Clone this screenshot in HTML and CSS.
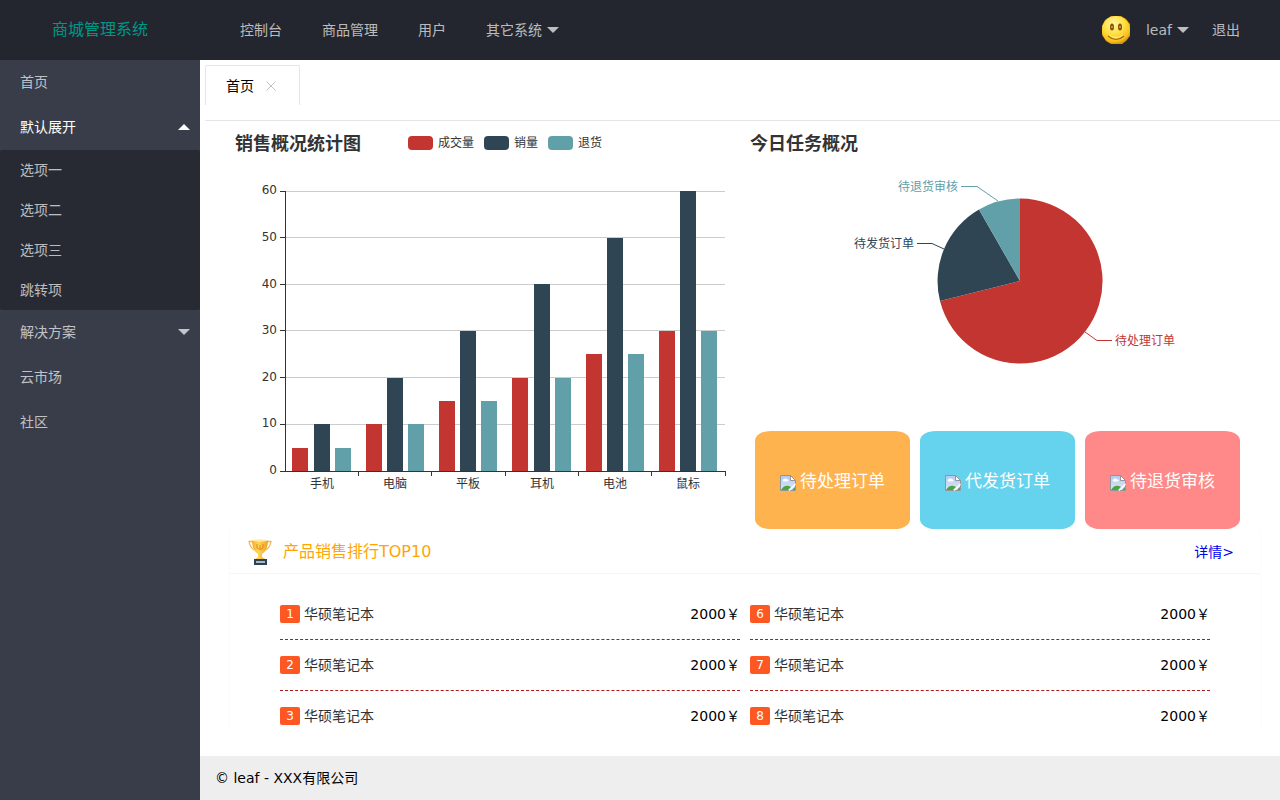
FILE: index.html
```html
<!DOCTYPE html>
<html lang="zh-CN">
<head>
<meta charset="utf-8">
<title>商城管理系统</title>
<link rel="stylesheet" href="styles.css">
</head>
<body>
<svg class="defs" aria-hidden="true">
  <defs>
    <linearGradient id="sky" x1="0" y1="0" x2="0" y2="1"><stop offset="0" stop-color="#b4c8f0"/><stop offset="1" stop-color="#dbe6fa"/></linearGradient>
    <radialGradient id="face" cx=".42" cy=".28" r=".75"><stop offset="0" stop-color="#fff6a0"/><stop offset=".5" stop-color="#ffdf3f"/><stop offset=".85" stop-color="#f7bd1c"/><stop offset="1" stop-color="#c98a10"/></radialGradient>
    <linearGradient id="gold" x1="0" y1="0" x2="1" y2="0"><stop offset="0" stop-color="#f5ab22"/><stop offset=".4" stop-color="#ffd65c"/><stop offset="1" stop-color="#f0a01c"/></linearGradient>
    <symbol id="missing" viewBox="0 0 16 16">
      <path d="M.5.5h10l5 5v10H.5z" fill="url(#sky)" stroke="#8f969c"/>
      <path d="M10.500.5v5h5z" fill="#fff" stroke="#8f969c"/>
      <path d="M3 6.500a1.500 1.500 0 0 1 1-2.500 2 2 0 0 1 3 .5 1 1 0 0 1 1 2z" fill="#fff"/>
      <path d="M1 15c2-4 5-5 8-4l2 1-3 3z" fill="#4da53c"/>
      <path d="M12 15h3v-3z" fill="#4da53c"/>
      <path d="M9 15.500L15.500 9" stroke="#fff" stroke-width="1.500"/>
    </symbol>
  </defs>
</svg>
<div class="app">
  <header class="header">
    <div class="logo">商城管理系统</div>
    <nav class="nav">
      <a href="#">控制台</a>
      <a href="#">商品管理</a>
      <a href="#">用户</a>
      <a href="#">其它系统<span class="caret"></span></a>
    </nav>
    <nav class="nav nav-user">
      <a href="#" class="user">
        <svg class="avatar" viewBox="0 0 30 30" aria-hidden="true">
          <path d="M10 1h10l5 3 4 5v12l-4 5-4 3H10l-5-3-4-6v-9l3-6z" fill="#d79a12"/>
          <circle cx="15" cy="15" r="14" fill="url(#face)"/>
          <ellipse cx="11" cy="12" rx="2" ry="3.500" fill="#8a5209"/>
          <ellipse cx="19" cy="12" rx="2" ry="3.500" fill="#8a5209"/>
          <circle cx="11" cy="12" r="1" fill="#c9a77c"/>
          <circle cx="19" cy="12" r="1" fill="#c9a77c"/>
          <path d="M7 21q8 7 16 0" fill="none" stroke="#a8680c" stroke-width="1.200"/>
          <path d="M8 20q7 5 14 0" fill="none" stroke="#fff09a" stroke-width="1"/>
        </svg>
        leaf<span class="caret"></span></a>
      <a href="#" class="logout">退出</a>
    </nav>
  </header>

  <div class="body">
    <aside class="side">
      <a href="#">首页</a>
      <a href="#" class="open">默认展开<span class="caret up"></span></a>
      <div class="sub">
        <a href="#">选项一</a>
        <a href="#">选项二</a>
        <a href="#">选项三</a>
        <a href="#">跳转项</a>
      </div>
      <a href="#">解决方案<span class="caret"></span></a>
      <a href="#">云市场</a>
      <a href="#">社区</a>
    </aside>

    <div class="column">
      <div class="tabs">
        <div class="tab">首页
          <button class="close" type="button" aria-label="关闭"><svg viewBox="0 0 10 10"><path d="M.5.5l9 9M9.500.5l-9 9" stroke="#c2c2c2" fill="none"/></svg></button>
        </div>
      </div>

      <main class="content">
        <div class="charts">
          <svg class="chart" viewBox="0 0 515 400" role="img" aria-label="销售概况统计图">
            <text x="5" y="29" class="chart-title">销售概况统计图</text>
            <rect x="178" y="15" width="25" height="14" rx="4" class="red"/>
            <rect x="254" y="15" width="25" height="14" rx="4" class="navy"/>
            <rect x="318" y="15" width="25" height="14" rx="4" class="teal"/>
            <g class="label"><text x="208" y="26">成交量</text><text x="284" y="26">销量</text><text x="348" y="26">退货</text></g>
            <path class="grid" d="M56 70.500H495M56 116.500H495M56 163.500H495M56 209.500H495M56 256.500H495M56 303.500H495"/>
            <path class="red" d="M62 350V327h16v23zM136 350V303h16v47zM209 350V280h16v70zM282 350V257h16v93zM356 350V233h16v117zM429 350V210h16v140z"/>
            <path class="navy" d="M84 350V303h16v47zM157 350V257h16v93zM230 350V210h16v140zM304 350V163h16v187zM377 350V117h16v233zM450 350V70h16v280z"/>
            <path class="teal" d="M105 350V327h16v23zM178 350V303h16v47zM251 350V280h16v70zM325 350V257h16v93zM398 350V233h16v117zM471 350V210h16v140z"/>
            <path class="axis" d="M55.500 70V351M50 350.500H496M50 70.500h5M50 116.500h5M50 163.500h5M50 209.500h5M50 256.500h5M50 303.500h5M128.500 351v4M201.500 351v4M275.500 351v4M348.500 351v4M421.500 351v4M495.500 351v4"/>
            <g class="label end"><text x="47" y="73">60</text><text x="47" y="120">50</text><text x="47" y="167">40</text><text x="47" y="213">30</text><text x="47" y="260">20</text><text x="47" y="306">10</text><text x="47" y="353">0</text></g>
            <g class="label mid"><text x="92" y="367">手机</text><text x="165" y="367">电脑</text><text x="238" y="367">平板</text><text x="312" y="367">耳机</text><text x="385" y="367">电池</text><text x="458" y="367">鼠标</text></g>
          </svg>

          <div class="tasks">
            <svg class="chart" viewBox="0 0 515 300" role="img" aria-label="今日任务概况">
              <text x="5" y="29" class="chart-title">今日任务概况</text>
              <path class="red" d="M275 160V77.500A82.500 82.500 0 1 1 195 180z"/>
              <path class="navy" d="M275 160L195 180A82.500 82.500 0 0 1 234 88.500z"/>
              <path class="teal" d="M275 160L234 88.500A82.500 82.500 0 0 1 275 77.500z"/>
              <path class="lead-red" d="M340 211l12 8.500h15"/>
              <path class="lead-navy" d="M199 128l-12-5.500h-15"/>
              <path class="lead-teal" d="M253 80l-21-14.500h-16"/>
              <g class="label"><text x="370" y="224" class="red">待处理订单</text></g>
              <g class="label end"><text x="169" y="127" class="navy">待发货订单</text><text x="213" y="70" class="teal">待退货审核</text></g>
            </svg>
            <div class="cards">
              <a href="#" class="card card-orange"><svg class="missing"><use href="#missing"/></svg>待处理订单</a>
              <a href="#" class="card card-blue"><svg class="missing"><use href="#missing"/></svg>代发货订单</a>
              <a href="#" class="card card-pink"><svg class="missing"><use href="#missing"/></svg>待退货审核</a>
            </div>
          </div>
        </div>

        <section class="panel">
          <div class="panel-head">
            <svg class="trophy" viewBox="0 0 24 26" aria-hidden="true">
              <path d="M5 2.500H1q1 7 7 9M19 2.500h4q-1 7-7 9" fill="none" stroke="#efb858" stroke-width="1.300"/>
              <path d="M4 1h16q0 10-6 14v3l3 2H7l3-2v-3Q4 11 4 1z" fill="url(#gold)"/>
              <ellipse cx="12" cy="1.500" rx="8" ry="1.200" fill="#ffe9a8"/>
              <path d="M9 5v4l2 1M12 6v5l3-2V5" stroke="#d98a16" fill="none"/>
              <path d="M6 20h13v6H6z" fill="#2c4152"/>
              <path d="M8 22h9v2H8z" fill="#a9b8c2"/>
            </svg>
            <h2>产品销售排行TOP10</h2>
            <a href="#" class="more">详情&gt;</a>
          </div>
          <div class="ranks">
            <div class="rank"><span class="badge">1</span><span class="name">华硕笔记本</span><span>2000￥</span></div>
            <div class="rank"><span class="badge">6</span><span class="name">华硕笔记本</span><span>2000￥</span></div>
            <div class="rank"><span class="badge">2</span><span class="name">华硕笔记本</span><span>2000￥</span></div>
            <div class="rank"><span class="badge">7</span><span class="name">华硕笔记本</span><span>2000￥</span></div>
            <div class="rank"><span class="badge">3</span><span class="name">华硕笔记本</span><span>2000￥</span></div>
            <div class="rank"><span class="badge">8</span><span class="name">华硕笔记本</span><span>2000￥</span></div>
          </div>
        </section>
      </main>

      <footer class="footer">© leaf - XXX有限公司</footer>
    </div>
  </div>
</div>
</body>
</html>
```
FILE: styles.css
```css
* { box-sizing: border-box; }
body {
  margin: 0;
  font: 14px/24px "DejaVu Sans", "Noto Sans CJK SC", sans-serif;
  color: #000;
  background: #fff;
}
a { color: inherit; text-decoration: none; }
.defs { position: absolute; width: 0; height: 0; }
.app { display: flex; flex-direction: column; height: 100vh; }

.header {
  display: flex;
  flex: none;
  height: 60px;
  line-height: 60px;
  background: #23262e;
  color: rgba(255, 255, 255, .7);
}
.logo { width: 200px; text-align: center; font-size: 16px; color: #009688; }
.nav { display: flex; padding: 0 20px; }
.nav a { display: flex; align-items: center; padding: 0 20px; }
.nav-user { margin-left: auto; }
.nav .user { padding: 0; }
.nav .logout { padding-left: 23px; }
.avatar { width: 30px; height: 30px; margin-right: 15px; }
.caret {
  margin-left: 5px;
  border: 6px solid transparent;
  border-top-color: currentColor;
  border-bottom: 0;
}
.caret.up { border-top: 0; border-bottom: 6px solid currentColor; }

.body { display: flex; flex: 1; min-height: 0; }
.side { flex: none; width: 200px; background: #393d49; color: rgba(255, 255, 255, .7); }
.side a { display: flex; align-items: center; height: 45px; padding: 0 10px 1px 20px; }
.side .open { color: #fff; }
.side .caret { margin-left: auto; }
.sub { background: rgba(0, 0, 0, .3); border-radius: 2px; }
.side .sub a { height: 40px; padding-bottom: 0; }

.column { display: flex; flex: 1; flex-direction: column; min-width: 0; }
.tabs {
  flex: none;
  display: flex;
  margin: 5px 0 0 5px;
  padding-bottom: 15px;
  border-bottom: 1px solid #e6e6e6;
}
.tab {
  display: flex;
  align-items: center;
  gap: 8px;
  height: 40px;
  padding: 0 19px 0 20px;
  border: 1px solid #e6e6e6;
  border-bottom: 0;
  border-radius: 2px 2px 0 0;
}
.close { display: flex; width: 18px; height: 18px; padding: 4px; border: 0; background: none; }
.close svg { width: 10px; height: 10px; }

.content { flex: 1; min-height: 0; padding: 0 20px 0 30px; margin-bottom: 28px; overflow: hidden; }
.charts { display: grid; grid-template-columns: 1fr 1fr; }
.chart { display: block; width: 100%; }
.chart-title { font-size: 18px; font-weight: bold; fill: #333; }
.label { font-size: 12px; fill: #333; }
.end { text-anchor: end; }
.mid { text-anchor: middle; }
.red { fill: #c23531; }
.navy { fill: #2f4554; }
.teal { fill: #61a0a8; }
.grid { fill: none; stroke: #ccc; }
.axis { fill: none; stroke: #333; }
.lead-red { fill: none; stroke: #c23531; }
.lead-navy { fill: none; stroke: #2f4554; }
.lead-teal { fill: none; stroke: #61a0a8; }

.cards { display: grid; grid-template-columns: repeat(3, 1fr); gap: 10px; padding: 10px 20px 0 10px; }
.card {
  display: flex;
  align-items: center;
  justify-content: center;
  gap: 4px;
  height: 98px;
  padding-top: 2px;
  border-radius: 10%;
  color: #fff;
  font-size: 17px;
}
.card-orange { background: #ffb34f; }
.card-blue { background: #66d3ee; }
.card-pink { background: #ff8888; }
.missing { width: 16px; height: 16px; margin-top: 4px; }

.panel { box-shadow: 0 1px 2px 0 rgba(0, 0, 0, .05); }
.panel-head {
  display: flex;
  align-items: center;
  height: 45px;
  padding: 2px 26px 0 18px;
  border-bottom: 1px solid #f6f6f6;
}
.trophy { width: 24px; height: 26px; margin-right: 11px; }
h2 { margin: 0; font-size: 16px; font-weight: normal; color: orange; }
.more { margin-left: auto; color: #0000ee; }
.ranks { display: grid; grid-template-columns: 1fr 1fr; column-gap: 10px; padding: 15px 50px; }
.rank { display: flex; align-items: center; height: 51px; border-bottom: 1px dashed #a81c1c; }
.badge {
  width: 20px;
  height: 18px;
  margin-right: 4px;
  border-radius: 2px;
  background: #ff5722;
  color: #fff;
  font-size: 12px;
  line-height: 18px;
  text-align: center;
}
.name { margin-right: auto; color: #333; }
.footer { flex: none; height: 44px; padding: 0 15px; line-height: 44px; background: #eee; }
```
